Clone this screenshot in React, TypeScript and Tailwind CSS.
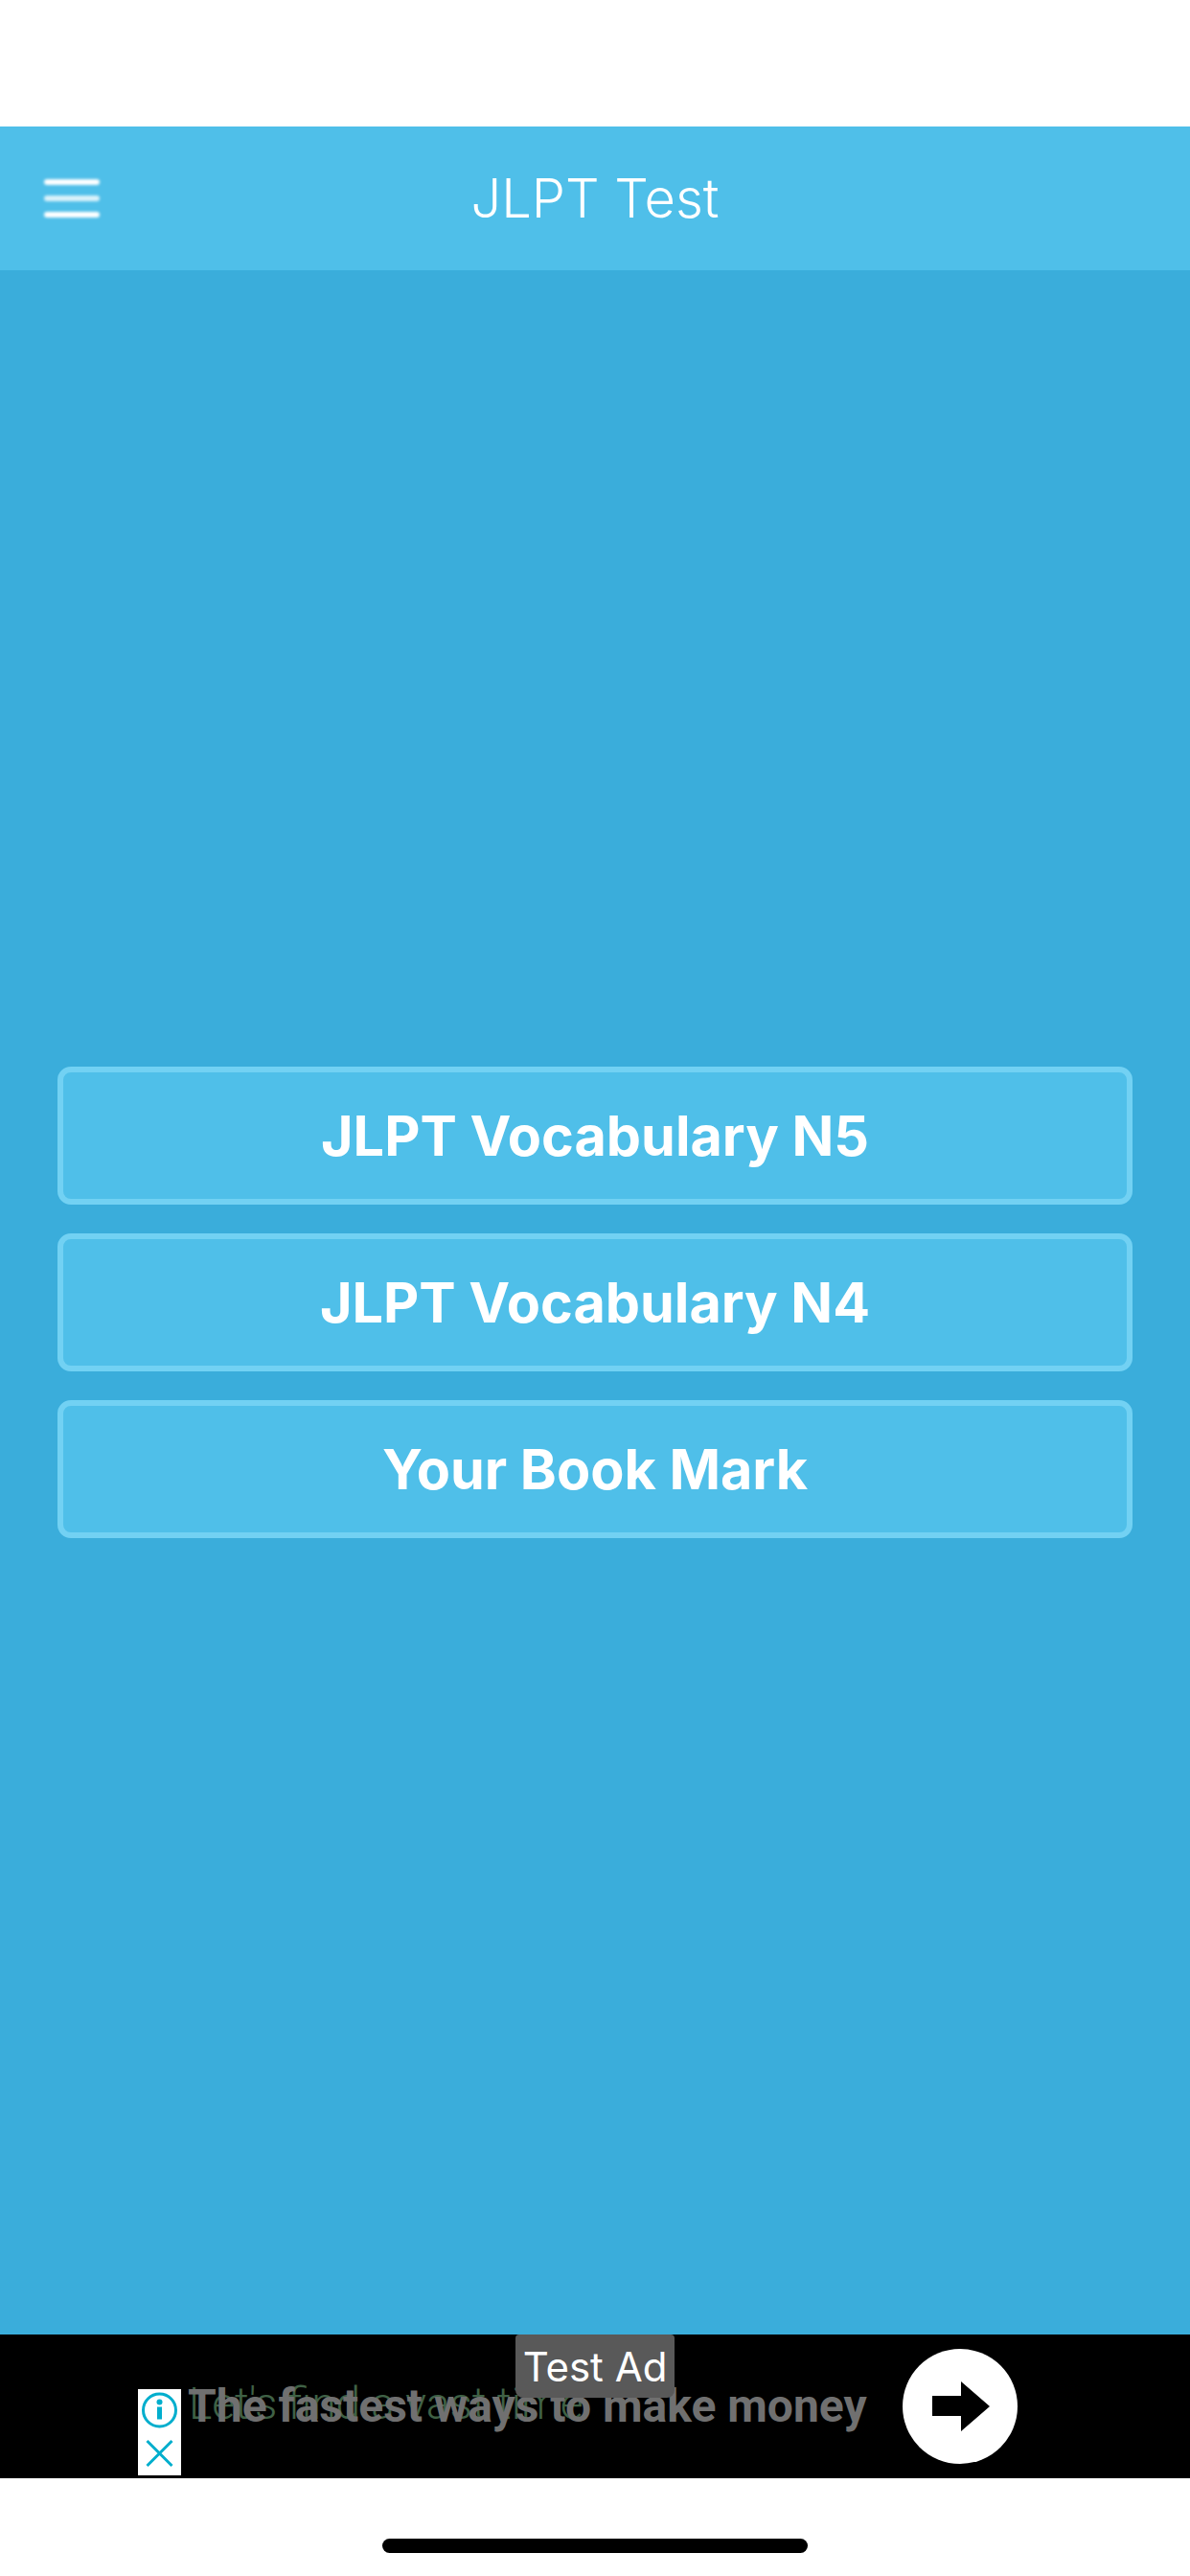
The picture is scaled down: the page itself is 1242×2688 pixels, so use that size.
import type { ReactNode } from 'react';

const menuItems = ['JLPT Vocabulary N5', 'JLPT Vocabulary N4', 'Your Book Mark'];

function AdChoices(): ReactNode {
  return (
    <svg viewBox="0 0 45 90" className="h-[90px] w-[45px]">
      <circle cx="22.5" cy="22" r="17" fill="none" stroke="#00aecd" strokeWidth="3" />
      <circle cx="22.5" cy="13.5" r="3" fill="#00aecd" />
      <path d="M20 18.5h5v13h-5z" fill="#00aecd" />
      <path d="M9.5 54l26 26M35.5 54l-26 26" fill="none" stroke="#00aecd" strokeWidth="3" />
    </svg>
  );
}

function AdBanner() {
  return (
    <div className="relative h-[150px] shrink-0 bg-black">
      <div className="absolute left-[538px] top-0 z-10 flex h-[66px] w-[166px] items-center justify-center rounded-b-lg rounded-t-sm bg-[#595959] text-[42px] text-white">
        Test Ad
      </div>
      <div className="absolute left-[144px] top-[57px] h-[90px] w-[45px] bg-white">
        <AdChoices />
      </div>
      <div className="absolute left-[197px] top-[42px] font-['Roboto',sans-serif] text-[46px] font-light leading-[60px] whitespace-nowrap text-[#3f6145]">
        Let's find a vast time
      </div>
      <div className="absolute left-[196px] top-[40px] font-['Roboto',sans-serif] text-[48px] font-bold leading-[70px] whitespace-nowrap text-[#707070]">
        The fastest ways to make money
      </div>
      <div className="absolute left-[942px] top-[15px] flex h-[120px] w-[120px] items-center justify-center rounded-full bg-white">
        <svg viewBox="0 0 60 52" className="ml-[2px] h-[52px] w-[60px]">
          <path d="M0 15h30V0l30 26-30 26V36H0z" fill="#000" />
        </svg>
      </div>
    </div>
  );
}

export default function App() {
  return (
    <div className="flex h-[2688px] w-[1242px] flex-col bg-white font-['Inter',sans-serif]">
      <div className="h-[132px] shrink-0" />
      <header className="relative flex h-[150px] shrink-0 items-center justify-center bg-[#4fbfe9]">
        <div className="absolute left-[46px] top-[55px] flex w-[58px] flex-col gap-[11px]">
          <div className="h-[6px] rounded-sm bg-white blur-[1.5px]" />
          <div className="h-[6px] rounded-sm bg-white/80 blur-[1.5px]" />
          <div className="h-[6px] rounded-sm bg-white blur-[1.5px]" />
        </div>
        <h1 className="text-[56px] font-light text-white">JLPT Test</h1>
      </header>
      <main className="flex h-[2154px] shrink-0 flex-col justify-center gap-[30px] bg-[#3aaddb] px-[60px]">
        {menuItems.map((item) => (
          <button
            key={item}
            className="flex h-[144px] items-center justify-center rounded-[14px] border-[6px] border-[#72d1f3] bg-[#4fbfe9] text-[57.5px] font-bold text-white"
          >
            {item}
          </button>
        ))}
      </main>
      <AdBanner />
      <div className="flex flex-1 items-start justify-center pt-[63px]">
        <div className="h-[15px] w-[444px] rounded-full bg-black" />
      </div>
    </div>
  );
}
